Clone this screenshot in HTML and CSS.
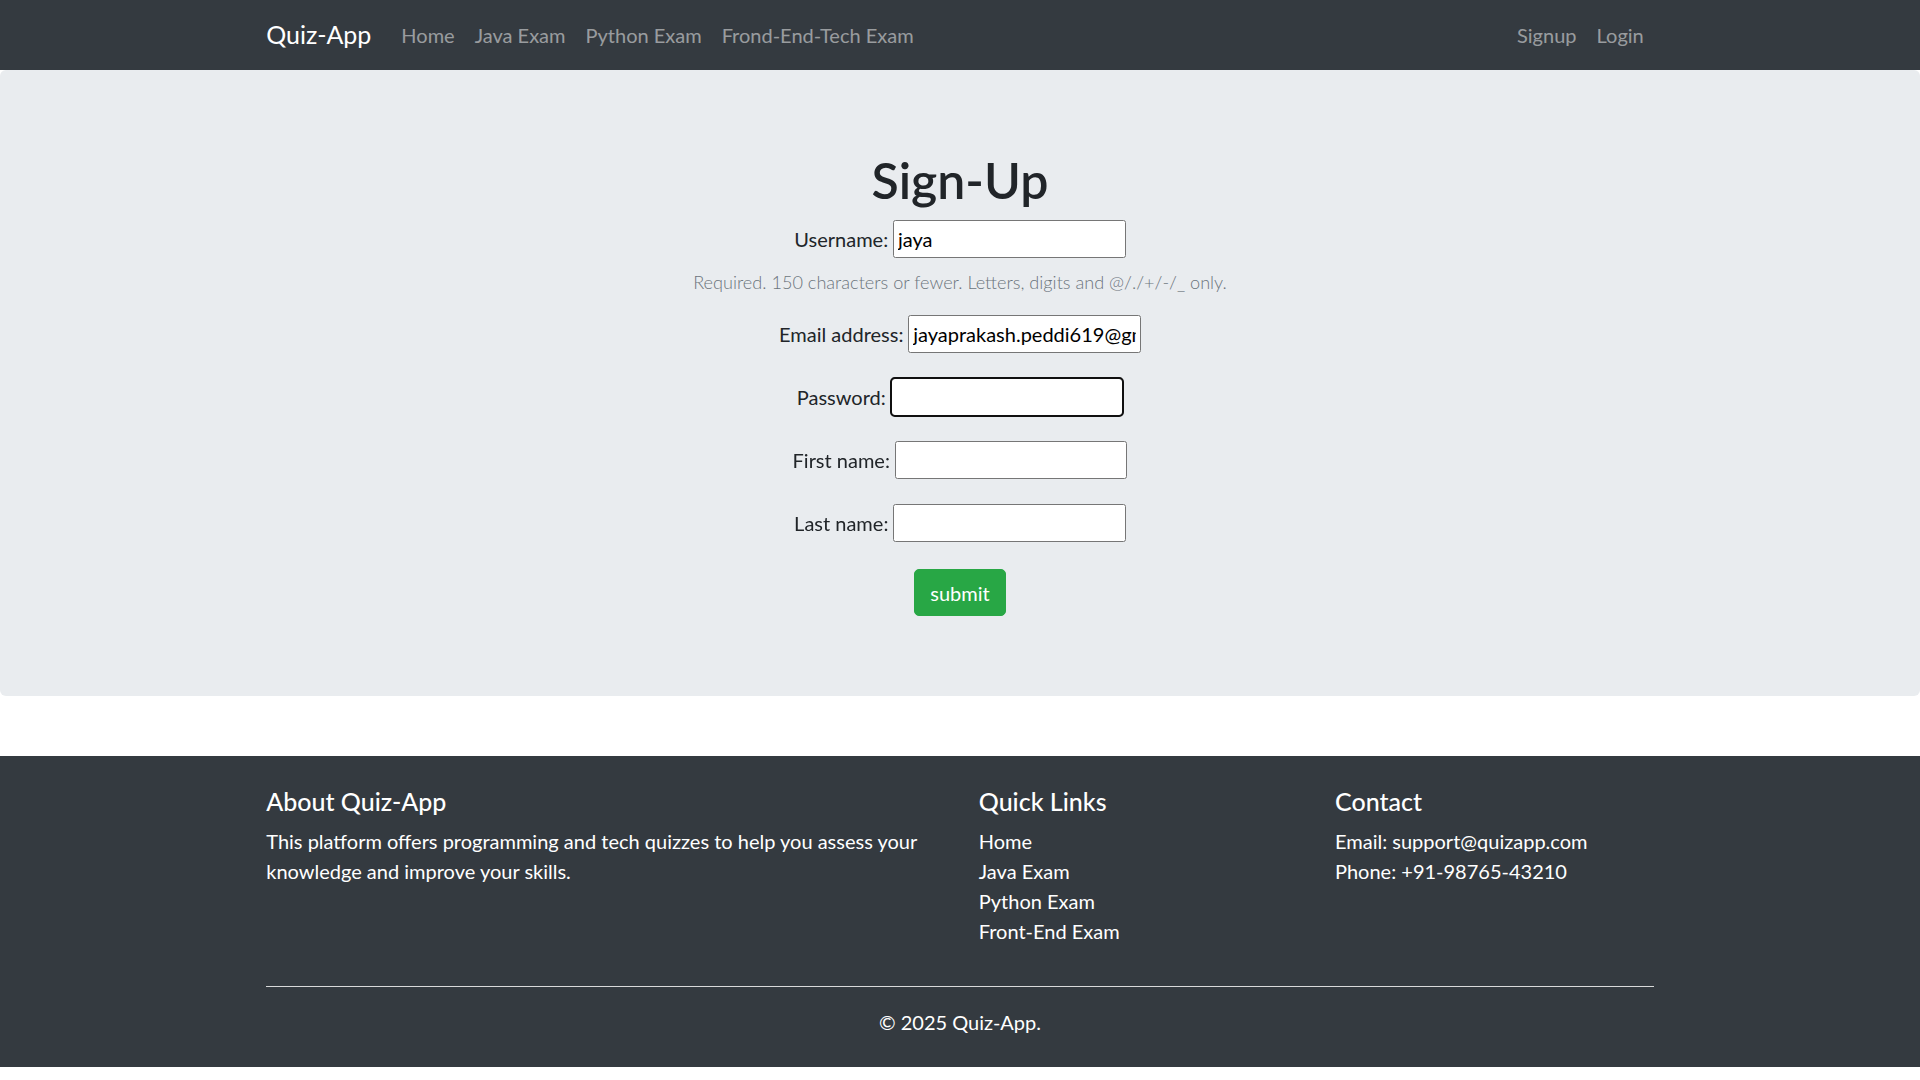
FILE: index.html
```html
<!DOCTYPE html>
<html lang="en">
<head>
  <meta charset="UTF-8">
  <meta name="viewport" content="width=device-width, initial-scale=1.0">
  <title>Sign-Up | Quiz-App</title>
  <link rel="stylesheet" href="styles.css">
</head>
<body>
  <nav class="navbar">
    <div class="container nav-inner">
      <a class="brand" href="#">Quiz-App</a>
      <ul class="nav-links">
        <li><a href="#">Home</a></li>
        <li><a href="#">Java Exam</a></li>
        <li><a href="#">Python Exam</a></li>
        <li><a href="#">Frond-End-Tech Exam</a></li>
      </ul>
      <ul class="nav-links nav-right">
        <li><a href="#">Signup</a></li>
        <li><a href="#">Login</a></li>
      </ul>
    </div>
  </nav>

  <div class="jumbotron">
    <h1>Sign-Up</h1>
    <form class="signup-form" onsubmit="return false">
      <div class="field">
        <label for="id_username">Username:</label>
        <input type="text" id="id_username" value="jaya">
      </div>
      <p class="helptext">Required. 150 characters or fewer. Letters, digits and @/./+/-/_ only.</p>
      <div class="field">
        <label for="id_email">Email address:</label>
        <input type="email" id="id_email" value="jayaprakash.peddi619@gmail.com">
      </div>
      <div class="field">
        <label for="id_password">Password:</label>
        <input type="password" id="id_password" class="is-focused" autofocus>
      </div>
      <div class="field">
        <label for="id_first_name">First name:</label>
        <input type="text" id="id_first_name">
      </div>
      <div class="field">
        <label for="id_last_name">Last name:</label>
        <input type="text" id="id_last_name">
      </div>
      <button type="submit" class="btn-submit">submit</button>
    </form>
  </div>

  <footer class="footer">
    <div class="container">
      <div class="footer-row">
        <div class="col-about">
          <h5>About Quiz-App</h5>
          <p>This platform offers programming and tech quizzes to help you assess your knowledge and improve your skills.</p>
        </div>
        <div class="col-links">
          <h5>Quick Links</h5>
          <ul>
            <li><a href="#">Home</a></li>
            <li><a href="#">Java Exam</a></li>
            <li><a href="#">Python Exam</a></li>
            <li><a href="#">Front-End Exam</a></li>
          </ul>
        </div>
        <div class="col-contact">
          <h5>Contact</h5>
          <p>Email: support@quizapp.com<br>Phone: +91-98765-43210</p>
        </div>
      </div>
      <hr>
      <p class="copy">&copy; 2025 Quiz-App.</p>
    </div>
  </footer>
</body>
</html>
```

FILE: styles.css
```css
/* 화면이 125% 배율로 찍혀 있어서 전체를 키움 */
html {
  zoom: 1.25;
}
* {
  box-sizing: border-box;
}
body {
  margin: 0;
  font-family: Lato, "Noto Sans", sans-serif;
  font-size: 16px;
  line-height: 1.5;
  color: #212529;
  background: #fff;
}
a {
  text-decoration: none;
}
.container {
  width: 1140px;
  margin: 0 auto;
  padding: 0 15px;
}

/* 상단 메뉴 */
.navbar {
  background-color: #343a40;
  padding: 8px 0;
}
.nav-inner {
  display: flex;
  align-items: center;
}
.brand {
  color: #fff;
  font-size: 20px;
  line-height: 30px;
  margin-right: 16px;
  padding: 5px 0;
}
.nav-links {
  display: flex;
  list-style: none;
  margin: 0; padding: 0;
}
.nav-links a {
  display: block;
  padding: 8px;
  color: rgba(255, 255, 255, 0.5);
}
.nav-right {
  margin-left: auto;
}

/* 가입 폼 영역 */
.jumbotron {
  background-color: #e9ecef;
  border-radius: 4.8px;
  padding: 64px 32px;
  margin-bottom: 48px;
  text-align: center;
}
.jumbotron h1 {
  margin: 0 0 8px;
  font-size: 40px;
  font-weight: 600;
  line-height: 1.2;
}
.signup-form {
  display: flex;
  flex-direction: column;
  align-items: center;
}
.field {
  display: flex;
  align-items: center;
  justify-content: center;
  gap: 4px;
  height: 30px;
  margin-bottom: 20.5px;
}
.field input {
  width: 186px; height: 30px;
  padding: 1px 3px;
  border: 1px solid #767676;
  border-radius: 2px;
  font-family: inherit;
  font-size: 16px;
  color: #000;
  background: #fff;
}
.field input:focus,
.field input.is-focused {
  outline: 2px solid #101010;
  outline-offset: -1px;
  border-radius: 3px;
}
.helptext {
  margin: -10.5px 0 16px;
  font-size: 14.5px;
  line-height: 20px;
  font-weight: 300;
  color: #6c757d;
}
.btn-submit {
  margin-top: 1.5px;
  padding: 6px 12px;
  font-family: inherit;
  font-size: 16px;
  line-height: 1.5;
  color: #fff;
  background-color: #28a745;
  border: 1px solid #28a745;
  border-radius: 4px;
  cursor: pointer;
}

/* 하단 */
.footer {
  background-color: #343a40;
  color: #fff;
  padding: 24px 0;
}
.footer-row {
  display: flex;
  margin: 0 -15px;
}
.footer-row > div {
  padding: 0 15px;
}
.col-about { width: 50%; }
.col-links { width: 25%; }
.col-contact { width: 25%; }
.footer h5 {
  margin: 0 0 8px;
  font-size: 20px;
  font-weight: 500;
  line-height: 1.2;
}
.footer p {
  margin: 0 0 16px;
}
.footer ul {
  list-style: none;
  margin: 0 0 16px;
  padding: 0;
}
.footer ul a {
  color: #fff;
}
.footer hr {
  margin: 16px 0;
  border: 0;
  border-top: 1px solid #d8d9da;
}
.footer .copy {
  margin: 0;
  text-align: center;
}
```
